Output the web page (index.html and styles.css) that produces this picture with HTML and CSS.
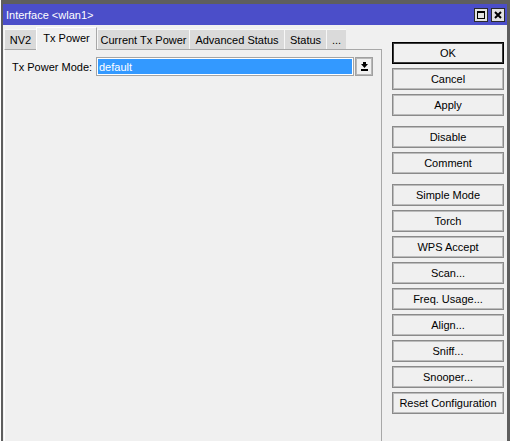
FILE: index.html
```html
<!DOCTYPE html>
<html>
<head>
<meta charset="utf-8">
<link rel="stylesheet" href="styles.css">
</head>
<body>
<div class="window">
  <div class="titlebar">
    <span class="title">Interface &lt;wlan1&gt;</span>
    <div class="winbtns">
      <div class="winbtn"><svg width="12" height="12" viewBox="0 0 12 12"><path d="M2 2h8v8H2z M3 4v5h6V4z" fill-rule="evenodd" fill="#000"/></svg></div>
      <div class="winbtn"><svg width="12" height="12" viewBox="0 0 12 12"><path d="M3 3l6 6M9 3l-6 6" stroke="#000" stroke-width="2"/></svg></div>
    </div>
  </div>
  <div class="main">
    <div class="left">
      <div class="tabs">
        <div class="tab w-nv2">NV2</div>
        <div class="tab active w-txp">Tx Power</div>
        <div class="tab w-cur">Current Tx Power</div>
        <div class="tab w-adv">Advanced Status</div>
        <div class="tab w-sta">Status</div>
        <div class="tab w-more">...</div>
      </div>
      <div class="panel">
        <div class="row">
          <span class="label">Tx Power Mode:</span>
          <div class="field">default</div>
          <div class="drop"><svg width="7" height="9" viewBox="0 0 7 9"><rect x="2" y="0" width="3" height="2" fill="#000"/><polygon points="0,2 7,2 3.5,6" fill="#000"/><rect x="0" y="7" width="7" height="2" fill="#000"/></svg></div>
        </div>
      </div>
    </div>
    <div class="right">
      <div class="group">
        <div class="btn default">OK</div>
        <div class="btn">Cancel</div>
        <div class="btn">Apply</div>
      </div>
      <div class="group">
        <div class="btn">Disable</div>
        <div class="btn">Comment</div>
      </div>
      <div class="group">
        <div class="btn">Simple Mode</div>
        <div class="btn">Torch</div>
        <div class="btn">WPS Accept</div>
        <div class="btn">Scan...</div>
        <div class="btn">Freq. Usage...</div>
        <div class="btn">Align...</div>
        <div class="btn">Sniff...</div>
        <div class="btn">Snooper...</div>
        <div class="btn">Reset Configuration</div>
      </div>
    </div>
  </div>
</div>
</body>
</html>
```
FILE: styles.css
```css
html, body {
  margin: 0;
  padding: 0;
  height: 441px;
  overflow: hidden;
  background: #ffffff;
}
body {
  font-family: "Liberation Sans", Arial, sans-serif;
  font-size: 11px;
  color: #000;
}
.window {
  margin-left: 1px;
  width: 509px;
  height: 441px;
  box-sizing: border-box;
  border-style: solid;
  border-color: #5e5e5e;
  border-width: 4px 3px 0 2px;
  background: #f0f0f0;
  display: flex;
  flex-direction: column;
}
.titlebar {
  height: 21px;
  flex: none;
  background: #4b4ec9;
  color: #fff;
  display: flex;
  align-items: center;
  justify-content: space-between;
  padding: 0 2px 0 3px;
}
.title {
  font-size: 11px;
}
.winbtns {
  display: flex;
  gap: 3px;
  align-items: center;
}
.winbtn {
  width: 14px;
  height: 14px;
  box-sizing: border-box;
  border: 1px solid #2b2b2b;
  background: #e2e2e2;
  display: flex;
  align-items: center;
  justify-content: center;
}
.main {
  flex: 1;
  min-height: 0;
  display: flex;
  padding-left: 1px;
  gap: 10px;
}
.left {
  width: 378px;
  display: flex;
  flex-direction: column;
  padding-top: 2px;
}
.tabs {
  display: flex;
  align-items: flex-end;
  height: 22px;
  flex: none;
}
.tab {
  height: 20px;
  box-sizing: border-box;
  background: #dadada;
  border-left: 1px solid #f7f7f7;
  border-top: 1px solid #f7f7f7;
  display: flex;
  align-items: center;
  justify-content: center;
  white-space: nowrap;
}
.tab.active {
  height: 23px;
  background: #f0f0f0;
  border-left: 1px solid #ffffff;
  border-top: 1px solid #ffffff;
  border-right: 1px solid #a8a8a8;
  margin-bottom: -1px;
  position: relative;
  z-index: 1;
  padding-bottom: 2px;
}
.w-nv2 { width: 32px; }
.w-txp { width: 61px; }
.w-cur { width: 92px; }
.w-adv { width: 95px; }
.w-sta { width: 42px; }
.w-more { width: 20px; }
.panel {
  flex: 1;
  border-top: 1px solid #a8a8a8;
  border-right: 1px solid #a8a8a8;
  border-left: 1px solid #ffffff;
  padding: 7px 0 0 7px;
}
.row {
  display: flex;
  align-items: center;
  height: 19px;
}
.label {
  width: 84px;
  flex: none;
}
.field {
  width: 258px;
  height: 19px;
  box-sizing: border-box;
  border: 1px solid #a4a4a4;
  box-shadow: inset 0 0 0 1px #ffffff;
  background: #3399ff;
  color: #fff;
  padding-left: 2px;
  display: flex;
  align-items: center;
}
.drop {
  margin-left: 1px;
  width: 18px;
  height: 19px;
  box-sizing: border-box;
  border: 1px solid #a0a0a0;
  box-shadow: inset 0 0 0 1px #b8b8b8;
  background: #f0f0f0;
  display: flex;
  align-items: center;
  justify-content: center;
}
.right {
  width: 112px;
  padding-top: 17px;
  display: flex;
  flex-direction: column;
  gap: 10px;
}
.group {
  display: flex;
  flex-direction: column;
  gap: 4px;
}
.btn {
  height: 22px;
  box-sizing: border-box;
  border: 1px solid #8a8a8a;
  box-shadow: inset 0 0 0 1px #bcbcbc;
  background: #f0f0f0;
  display: flex;
  align-items: center;
  justify-content: center;
  white-space: nowrap;
}
.btn.default {
  border: 1px solid #000;
  box-shadow: inset 0 0 0 1px #3a3a3a;
}
```
